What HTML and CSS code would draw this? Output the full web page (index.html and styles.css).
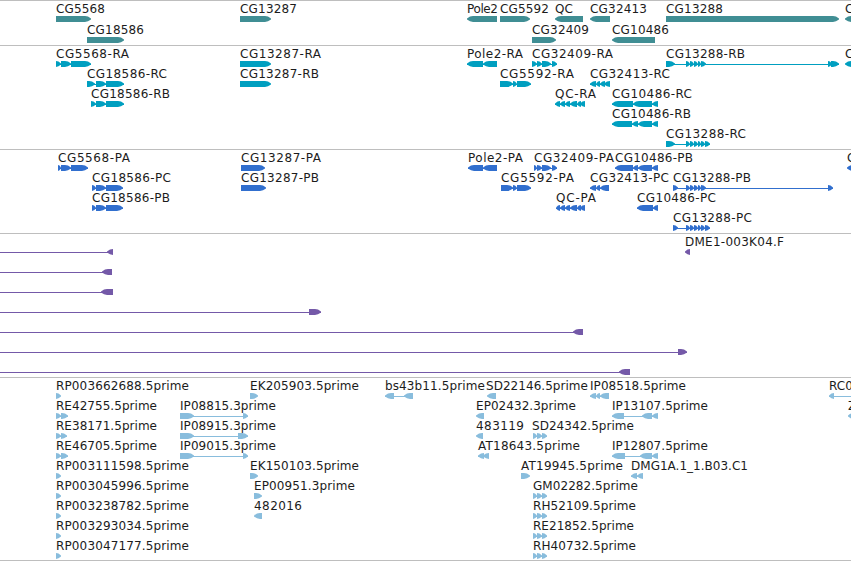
FILE: index.html
```
<!DOCTYPE html>
<html lang="en">
  <head>
    <meta charset="UTF-8" />
    <meta name="viewport" content="width=device-width, initial-scale=1.0" />
    <title>Genome browser</title>
    <link rel="stylesheet" href="styles.css">
  </head>
  <body>
    <main class="browser">
      <section class="track genes" data-track="genes"></section>
      <section class="track transcripts" data-track="transcripts"></section>
      <section class="track proteins" data-track="proteins"></section>
      <section class="track bacs" data-track="bacs"></section>
      <section class="track ests" data-track="ests"></section>
    </main>
    <script src="tracks.js"></script>
  </body>
</html>
```

FILE: styles.css
```
* {
  box-sizing: border-box;
}

body {
  margin: 0;
  background-color: white;
  overflow: hidden;
}

.browser {
  display: flex;
  flex-direction: column;
  width: 851px;
  height: 561px;
  border-bottom: 1px solid #bebebe;
}

.track {
  border-top: 1px solid #bebebe;
}

.track svg {
  display: block;
  width: 100%;
  height: 100%;
}

.genes {
  height: 45px;
  color: #408e94;
}

.transcripts {
  height: 104px;
  color: #009fc0;
}

.proteins {
  height: 84px;
  color: #316fce;
}

.bacs {
  height: 144px;
  color: #7459a8;
}

.ests {
  height: 183px;
  color: #89bddd;
}

.label {
  font-family: "DejaVu Sans", sans-serif;
  font-size: 12px;
  fill: #1c1c1c;
}

.exon {
  fill: currentColor;
}

.intron {
  fill: currentColor;
  shape-rendering: crispEdges;
}
```

FILE: tracks.js
```
// feature: [row, label, label start, label end, strand, exons]
const tracks = {
  genes: {
    pitch: 21,
    features: [
      [0, "CG5568", 56, 105, "+", [[56, 91]]],
      [0, "CG13287", 240, 297, "+", [[240, 271]]],
      [0, "Pole2", 467, 498, "-", [[467, 497]]],
      [0, "CG5592", 500, 549, "+", [[500, 530]]],
      [0, "QC", 555, 573, "-", [[555, 583]]],
      [0, "CG32413", 590, 647, "-", [[590, 610]]],
      [0, "CG13288", 666, 723, "+", [[666, 839]]],
      [0, "C", 845, 853, "-", [[845, 870]]],
      [1, "CG18586", 87, 144, "+", [[87, 124]]],
      [1, "CG32409", 532, 589, "+", [[532, 556]]],
      [1, "CG10486", 612, 669, "-", [[612, 655]]],
    ],
  },
  transcripts: {
    pitch: 20,
    features: [
      [0, "CG5568-RA", 56, 129, "+", [[56, 61], [61, 71], [71, 91]]],
      [0, "CG13287-RA", 240, 321, "+", [[240, 271]]],
      [0, "Pole2-RA", 467, 523, "-", [[467, 483], [483, 497]]],
      [0, "CG32409-RA", 532, 613, "+", [[532, 537], [537, 542], [542, 551], [552, 557]]],
      [0, "CG13288-RB", 666, 745, "+", [[666, 675], [686, 690], [690, 694], [694, 698], [698, 701], [701, 706], [828, 832], [831, 839]]],
      [0, "C", 845, 853, "-", [[845, 870]]],
      [1, "CG18586-RC", 87, 167, "+", [[87, 95], [96, 106], [106, 124]]],
      [1, "CG13287-RB", 240, 319, "+", [[240, 271]]],
      [1, "CG5592-RA", 500, 574, "+", [[500, 513], [513, 517], [517, 531]]],
      [1, "CG32413-RC", 590, 670, "-", [[590, 596], [596, 600], [600, 605], [604, 610]]],
      [2, "CG18586-RB", 91, 170, "+", [[91, 96], [96, 106], [106, 124]]],
      [2, "QC-RA", 555, 596, "-", [[555, 560], [560, 565], [565, 570], [570, 577], [577, 581], [580, 585]]],
      [2, "CG10486-RC", 612, 692, "-", [[612, 633], [633, 652], [652, 658]]],
      [3, "CG10486-RB", 612, 691, "-", [[612, 632], [632, 638], [638, 652], [652, 658]]],
      [4, "CG13288-RC", 666, 746, "+", [[666, 675], [686, 690], [690, 694], [694, 698], [698, 701], [701, 705], [705, 710]]],
    ],
  },
  proteins: {
    pitch: 20,
    features: [
      [0, "CG5568-PA", 58, 130, "+", [[58, 61], [61, 71], [71, 88]]],
      [0, "CG13287-PA", 241, 321, "+", [[241, 265]]],
      [0, "Pole2-PA", 468, 523, "-", [[468, 483], [483, 497]]],
      [0, "CG32409-PA", 534, 614, "+", [[534, 537], [537, 542], [542, 551], [552, 557]]],
      [0, "CG10486-PB", 615, 693, "-", [[615, 633], [633, 638], [638, 652], [652, 658]]],
      [0, "C", 847, 855, "-", [[847, 870]]],
      [1, "CG18586-PC", 92, 171, "+", [[92, 96], [96, 106], [106, 123]]],
      [1, "CG13287-PB", 241, 319, "+", [[241, 266]]],
      [1, "CG5592-PA", 501, 574, "+", [[501, 513], [513, 517], [517, 531]]],
      [1, "CG32413-PC", 590, 669, "-", [[590, 596], [596, 600], [600, 609]]],
      [1, "CG13288-PB", 673, 751, "+", [[673, 678], [686, 690], [690, 694], [694, 698], [698, 701], [701, 706], [828, 833]]],
      [2, "CG18586-PB", 92, 170, "+", [[92, 96], [96, 106], [106, 123]]],
      [2, "QC-PA", 556, 596, "-", [[556, 560], [560, 565], [565, 570], [570, 577], [577, 581], [580, 585]]],
      [2, "CG10486-PC", 637, 716, "-", [[637, 653], [653, 658]]],
      [3, "CG13288-PC", 673, 752, "+", [[673, 678], [686, 690], [690, 694], [694, 698], [698, 701], [701, 705], [705, 710]]],
    ],
  },
  bacs: {
    pitch: 20,
    features: [
      [0, "DME1-003K04.F", 685, 784, "-", [[685, 690]]],
      [0, "", 0, 0, "-", [[-20, -10], [107, 113]]],
      [1, "", 0, 0, "-", [[-20, -10], [102, 112]]],
      [2, "", 0, 0, "-", [[-20, -10], [101, 113]]],
      [3, "", 0, 0, "+", [[-20, -10], [309, 321]]],
      [4, "", 0, 0, "-", [[-20, -10], [573, 583]]],
      [5, "", 0, 0, "+", [[-20, -10], [678, 687]]],
      [6, "", 0, 0, "-", [[-20, -10], [619, 630]]],
    ],
  },
  ests: {
    pitch: 20,
    features: [
      [0, "RP003662688.5prime", 56, 189, "+", [[56, 61]]],
      [0, "EK205903.5prime", 250, 359, "+", [[250, 258]]],
      [0, "bs43b11.5prime", 385, 485, "-", [[385, 394], [404, 413]]],
      [0, "SD22146.5prime", 486, 588, "-", [[487, 496]]],
      [0, "IP08518.5prime", 590, 686, "-", [[590, 596], [596, 600], [600, 609]]],
      [0, "RC0", 829, 853, "-", [[829, 834], [860, 870]]],
      [1, "RE42755.5prime", 56, 157, "+", [[56, 61], [61, 68]]],
      [1, "IP08815.3prime", 180, 276, "+", [[180, 194], [243, 248]]],
      [1, "EP02432.3prime", 476, 576, "-", [[476, 484]]],
      [1, "IP13107.5prime", 612, 708, "-", [[612, 624], [642, 652], [652, 658]]],
      [1, "Z", 848, 856, "-", [[848, 870]]],
      [2, "RE38171.5prime", 56, 157, "+", [[56, 61], [61, 67]]],
      [2, "IP08915.3prime", 180, 276, "+", [[180, 194], [238, 248]]],
      [2, "483119", 476, 524, "-", [[476, 483]]],
      [2, "SD24342.5prime", 532, 634, "+", [[533, 537], [537, 542], [542, 547]]],
      [3, "RE46705.5prime", 56, 157, "+", [[56, 61], [61, 68]]],
      [3, "IP09015.3prime", 180, 276, "+", [[180, 194], [243, 248]]],
      [3, "AT18643.5prime", 478, 580, "-", [[478, 484], [483, 489]]],
      [3, "IP12807.5prime", 612, 708, "-", [[612, 625], [640, 652], [652, 658]]],
      [4, "RP003111598.5prime", 56, 189, "+", [[56, 61]]],
      [4, "EK150103.5prime", 250, 359, "+", [[250, 258]]],
      [4, "AT19945.5prime", 521, 623, "+", [[521, 530]]],
      [4, "DMG1A.1_1.B03.C1", 631, 748, "-", [[631, 637], [637, 643]]],
      [5, "RP003045996.5prime", 56, 189, "+", [[56, 61]]],
      [5, "EP00951.3prime", 254, 355, "+", [[254, 262]]],
      [5, "GM02282.5prime", 533, 638, "+", [[533, 537], [537, 542], [542, 547]]],
      [6, "RP003238782.5prime", 56, 189, "+", [[56, 61]]],
      [6, "482016", 254, 302, "-", [[254, 262]]],
      [6, "RH52109.5prime", 533, 636, "+", [[533, 537], [537, 542], [542, 547]]],
      [7, "RP003293034.5prime", 56, 189, "+", [[56, 61]]],
      [7, "RE21852.5prime", 533, 634, "+", [[533, 537], [537, 542], [542, 547]]],
      [8, "RP003047177.5prime", 56, 189, "+", [[56, 61]]],
      [8, "RH40732.5prime", 533, 636, "+", [[533, 537], [537, 542], [542, 547]]],
    ],
  },
};

// exon bar, 6px high, rounded to a point at the end the strand runs to
function exon(start, end, strand, top) {
  const dir = strand == "+" ? 1 : -1;
  const head = Math.min(6, end - start);
  const tip = strand == "+" ? end : start;
  const back = strand == "+" ? start : end;
  const neck = tip - dir * head;
  const bend = neck + dir * head * 0.5;
  const mid = top + 3;
  const bottom = top + 6;
  return `<path class="exon" d="M${back} ${top}H${neck}Q${bend} ${top} ${tip} ${mid - 0.6}V${mid + 0.6}Q${bend} ${bottom} ${neck} ${bottom}H${back}Z"/>`;
}

function draw(section) {
  const track = tracks[section.dataset.track];
  let svg = "";
  track.features.forEach(([row, name, x, labelEnd, strand, exons]) => {
    const top = 15 + row * track.pitch;
    const first = exons[0][0];
    const last = exons[exons.length - 1][1];
    if (exons.length > 1) {
      svg += `<rect class="intron" x="${first}" y="${top + 3}" width="${last - first}" height="1"/>`;
    }
    exons.forEach(([start, end]) => {
      svg += exon(start, end, strand, top);
    });
    if (name) {
      svg += `<text class="label" x="${x}" y="${top - 3}" textLength="${labelEnd - x}">${name}</text>`;
    }
  });
  section.innerHTML = `<svg>${svg}</svg>`;
}

document.querySelectorAll(".track").forEach(draw);
```
